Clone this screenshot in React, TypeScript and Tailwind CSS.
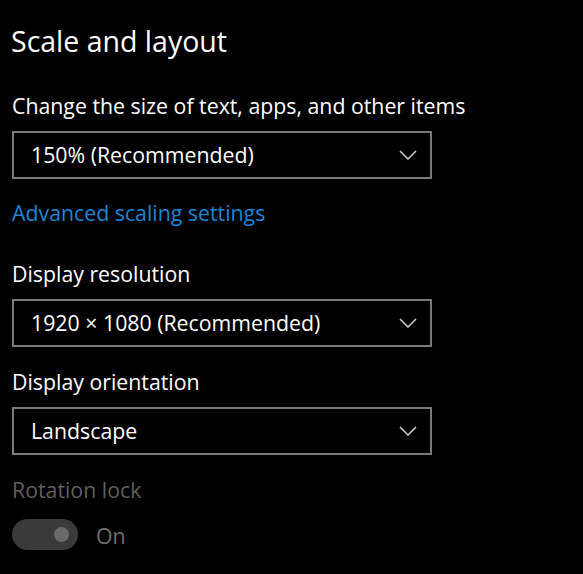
import React from "react";

const font = { fontFamily: '"Open Sans", "Noto Sans", sans-serif' };

function Chevron() {
  return (
    <svg width="18" height="10" viewBox="0 0 18 10" fill="none">
      <path d="M1 1 L9 9 L17 1" stroke="#d0d0d0" strokeWidth="1.5" />
    </svg>
  );
}

function Select({ value }: { value: string }) {
  return (
    <div className="w-[420px] h-[48px] border-2 border-[#7a7a7a] flex items-center justify-between pl-[17px] pr-[13px]">
      <span className="text-[21.3px] text-white leading-none">{value}</span>
      <Chevron />
    </div>
  );
}

export default function App() {
  return (
    <div className="w-[583px] h-[574px] bg-black text-white overflow-hidden pl-[12px]" style={font}>
      <div className="pt-[24px] text-[28.5px] leading-[34px] -ml-[1px]">Scale and layout</div>
      <div className="mt-[34px] text-[21.3px] leading-[28px]">Change the size of text, apps, and other items</div>
      <div className="mt-[11px]"><Select value="150% (Recommended)" /></div>
      <div className="mt-[20px] text-[21.3px] leading-[28px] text-[#1a86d8]">Advanced scaling settings</div>
      <div className="mt-[33px] text-[21.3px] leading-[28px]">Display resolution</div>
      <div className="mt-[11px]"><Select value="1920 × 1080 (Recommended)" /></div>
      <div className="mt-[21px] text-[21.3px] leading-[28px]">Display orientation</div>
      <div className="mt-[11px]"><Select value="Landscape" /></div>
      <div className="mt-[21px] text-[21.3px] leading-[28px] text-[#5f5f5f]">Rotation lock</div>
      <div className="mt-[13px] flex items-center gap-[18px]">
        <div className="w-[66px] h-[31px] rounded-full bg-[#3a3a3a] flex items-center justify-end pr-[9px]">
          <div className="w-[15px] h-[15px] rounded-full bg-[#6b6b6b]" />
        </div>
        <span className="text-[21.3px] text-[#6f6f6f] mt-[3px]">On</span>
      </div>
    </div>
  );
}
